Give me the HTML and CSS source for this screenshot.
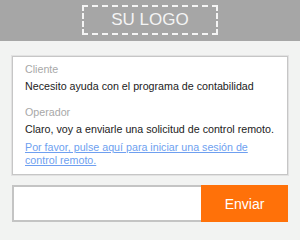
FILE: index.html
```html
<!DOCTYPE html>
<html lang="es">

<head>
    <meta charset="UTF-8">
    <meta name="viewport" content="width=device-width, initial-scale=1.0">
    <title>Chat de soporte</title>
    <link rel="stylesheet" href="styles.css">
</head>

<body>
    <div class="header">
        <div class="logo">SU LOGO</div>
    </div>

    <div class="main">
        <div class="chat">
            <div class="msg">
                <div class="who">Cliente</div>
                <div class="text">Necesito ayuda con el programa de contabilidad</div>
            </div>
            <div class="msg">
                <div class="who">Operador</div>
                <div class="text">Claro, voy a enviarle una solicitud de control remoto.</div>
                <a class="link" href="#">Por favor, pulse aquí para iniciar una sesión de control remoto.</a>
            </div>
        </div>

        <div class="send">
            <input type="text" class="field">
            <button class="btn">Enviar</button>
        </div>
    </div>
</body>

</html>
```

FILE: styles.css
```css
body {
    margin: 0;
    font-family: "Liberation Sans", Arial, Helvetica, sans-serif;
    background-color: #f2f3f2;
    width: 300px;
    height: 240px;
    overflow: hidden;
}

.header {
    height: 41px;
    background-color: #a6a6a6;
    display: flex;
    justify-content: center;
    padding-top: 5px;
    box-sizing: border-box;
}

.logo {
    width: 136px;
    height: 30px;
    box-sizing: border-box;
    border: 2px dashed #f4f4f4;
    color: #f4f4f4;
    font-size: 17px;
    display: flex;
    align-items: center;
    justify-content: center;
}

.main {
    padding: 15px 12px 0 12px;
}

.chat {
    height: 119px;
    box-sizing: border-box;
    background-color: #fff;
    border: 1px solid #c6c6c6;
    box-shadow: 0 0 0 1px #e2e2e2;
    padding: 5px 4px 0 12px;
    font-size: 10.7px;
}

.msg + .msg {
    margin-top: 12px;
}

.who {
    color: #a8a8a8;
    line-height: 14px;
}

.text {
    color: #222;
    line-height: 14px;
    margin-top: 3px;
}

.link {
    display: block;
    line-height: 13px;
    color: #6e9ff0;
    margin-top: 5px;
    padding-right: 20px;
}

.send {
    display: flex;
    margin-top: 10px;
    height: 37px;
}

.field {
    flex: 1;
    width: 0;
    min-width: 0;
    border: 2px solid #c4c4c4;
    border-right: none;
    background-color: #fff;
    margin: 0;
    padding: 0 8px;
    outline: none;
}

.btn {
    width: 87px;
    border: none;
    background-color: #ff7109;
    color: #fff;
    font-family: "Liberation Sans", Arial, Helvetica, sans-serif;
    font-size: 14px;
    margin: 0;
    padding: 0;
    cursor: pointer;
}
```
